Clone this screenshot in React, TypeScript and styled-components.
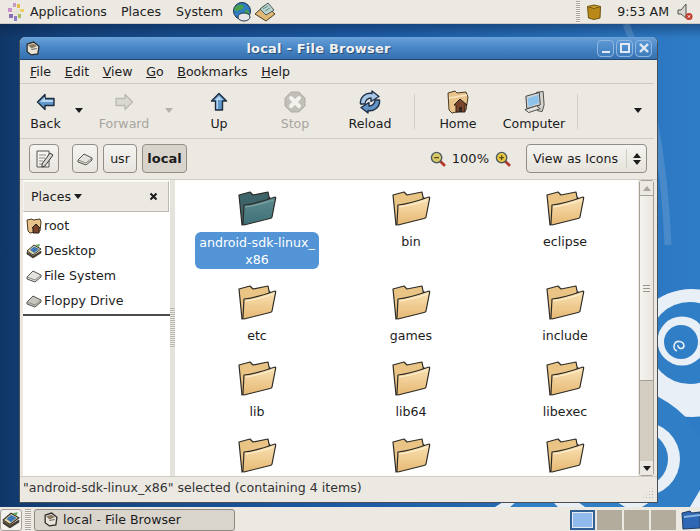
import * as React from 'react'
import styled, { createGlobalStyle } from 'styled-components'

const Global = createGlobalStyle`
  html, body { margin: 0; padding: 0; }
  body { width: 700px; height: 531px; overflow: hidden; font-family: "DejaVu Sans", sans-serif; font-size: 12.6px; color: #1c1c1c; }
  * { box-sizing: border-box; }
`

const Screen = styled.div`
  width: 700px;
  height: 531px;
  display: flex;
  flex-direction: column;
  background: #ece9e3;
`
const Panel = styled.div`
  height: 24px;
  flex: none;
  display: flex;
  align-items: center;
  background: #ece9e2;
`
const TopPanel = styled(Panel)`
  padding: 0 7px;
  border-bottom: 1px solid #cfcbc2;
`
const PanelMenu = styled.span<{ $gap: number }>`
  margin-left: ${p => p.$gap}px;
  color: #222;
`
const PanelIcons = styled.div`
  display: flex;
  align-items: center;
  gap: 2px;
  margin-left: 9px;
`
const Clock = styled.span`
  margin: 0 8px 0 16px;
  white-space: nowrap;
`
const Grip = styled.div<{ $w: number; $mr: number; $ml?: number }>`
  width: ${p => p.$w}px;
  height: 22px;
  flex: none;
  margin: 0 ${p => p.$mr}px 0 ${p => p.$ml || 0}px;
  background: repeating-linear-gradient(#a9a59c 0 1px, #f6f4f0 1px 2px);
`
const Spacer = styled.div`
  flex: 1;
`
const Desktop = styled.div`
  position: relative;
  flex: 1;
  overflow: hidden;
  background:
    linear-gradient(180deg, rgba(8, 28, 60, 0.4), rgba(8, 28, 60, 0) 14px),
    linear-gradient(90deg, #113768 0, #14427c 60px, #1c5aa4 340px, #2c76c0 640px, #2f7cc6 700px);
`
const Swirl = styled.svg`
  position: absolute;
  left: 0;
  top: 0;
`
const Window = styled.div`
  position: absolute;
  left: 19px;
  top: 13px;
  width: 639px;
  height: 466px;
  display: flex;
  flex-direction: column;
  background: #ece9e3;
  border: 1px solid #4a4f56;
  border-top: none;
  border-radius: 6px 6px 0 0;
  overflow: hidden;
`
const TitleBar = styled.div`
  height: 23px;
  flex: none;
  display: flex;
  align-items: center;
  gap: 2px;
  padding: 0 5px 0 5px;
  background: linear-gradient(#6aa1d8, #4a88c8 45%, #3570b0);
  border-bottom: 1px solid #24486f;
`
const Title = styled.div`
  flex: 1;
  text-align: center;
  color: #f2f2f2;
  font-weight: bold;
  font-size: 13px;
  letter-spacing: 0.2px;
  text-shadow: 1px 1px 0 #2a4f78;
`
const WinButton = styled.div`
  width: 17px;
  height: 17px;
  display: flex;
  align-items: center;
  justify-content: center;
  border: 1px solid #8fb6df;
  border-radius: 4px;
  background: linear-gradient(#5b97d4, #3f7dbd);
`
const MenuBar = styled.div`
  height: 24px;
  flex: none;
  display: flex;
  align-items: center;
  padding-left: 10px;
  gap: 13.6px;
  margin-right: 3px;
  border-bottom: 1px solid #cfccc4;
`
const MenuItem = styled.span`
  & u { text-underline-offset: 1px; }
`
const ToolBar = styled.div`
  height: 55px;
  flex: none;
  display: flex;
  align-items: stretch;
  margin-right: 3px;
  border-bottom: 1px solid #cfccc4;
`
const ToolButton = styled.div<{ $w: number; $off?: boolean }>`
  width: ${p => p.$w}px;
  display: flex;
  flex-direction: column;
  align-items: center;
  padding-top: 6px;
  color: ${p => (p.$off ? '#a8a59e' : '#1c1c1c')};
  flex: none;
`
const ToolIcon = styled.div`
  height: 24px;
  display: flex;
  align-items: center;
  justify-content: center;
`
const ToolLabel = styled.span`
  margin-top: 2px;
  line-height: 16px;
  white-space: nowrap;
`
const Arrow = styled.div<{ $off?: boolean; $mr?: number }>`
  width: 16px;
  flex: none;
  margin-right: ${p => p.$mr || 0}px;
  display: flex;
  align-items: center;
  justify-content: center;
  color: ${p => (p.$off ? '#b5b2aa' : '#1c1c1c')};
  padding-bottom: 2px;
  &::before {
    content: '';
    border: 4px solid transparent;
    border-top: 5px solid currentColor;
    border-bottom: none;
  }
`
const ToolSep = styled.div<{ $l: number }>`
  width: 1px;
  flex: none;
  margin: 10px 0 9px ${p => p.$l}px;
  background: #d2cfc7;
`
const LocationBar = styled.div`
  height: 41px;
  flex: none;
  display: flex;
  align-items: center;
  padding: 0 10px 1px 9px;
  border-bottom: 1px solid #cfccc4;
`
const PathButton = styled.div<{ $w: number; $mr: number; $on?: boolean }>`
  height: 29px;
  width: ${p => p.$w}px;
  margin-right: ${p => p.$mr}px;
  display: flex;
  align-items: center;
  justify-content: center;
  font-size: ${p => (p.$on ? 13 : 12.6)}px;
  font-weight: ${p => (p.$on ? 'bold' : 'normal')};
  background: ${p => (p.$on ? '#d9d4cb' : 'linear-gradient(#f6f4f1, #e8e5df)')};
  border: 1px solid #928e86;
  border-radius: 4px;
`
const ZoomLabel = styled.span`
  margin: 0 6px;
  font-size: 13px;
`
const ViewSelect = styled.div`
  width: 121px;
  height: 29px;
  margin-left: 15px;
  display: flex;
  align-items: center;
  padding-left: 6px;
  white-space: nowrap;
  background: linear-gradient(#f6f4f1, #e6e3dc);
  border: 1px solid #928e86;
  border-radius: 4px;
`
const SelectDivider = styled.div`
  width: 1px;
  height: 19px;
  margin: 0 6px 0 8px;
  background: #cfccc4;
`
const Main = styled.div`
  height: 296px;
  flex: none;
  display: flex;
  margin: 0 3px;
`
const Sidebar = styled.div`
  width: 147px;
  flex: none;
  display: flex;
  flex-direction: column;
  background: #fff;
`
const SideHead = styled.div`
  height: 31px;
  flex: none;
  margin: 1px 1px 0 0;
  display: flex;
  align-items: center;
  justify-content: space-between;
  padding: 0 10px 0 7px;
  background: #ece9e3;
  border: 1px solid #bdb9b0;
  border-top-color: #f5f3ef;
  border-left-color: #f5f3ef;
`
const HeadDrop = styled.span`
  display: inline-block;
  margin-left: 3px;
  vertical-align: 2px;
  border: 4px solid transparent;
  border-top: 5px solid #1c1c1c;
  border-bottom: none;
`
const SideList = styled.div`
  display: flex;
  flex-direction: column;
  padding-top: 1px;
  border-bottom: 2px solid #4c4c4c;
`
const SideRow = styled.div`
  height: 25px;
  display: flex;
  align-items: center;
  gap: 2px;
  padding-left: 3px;
  &:last-child { height: 26px; padding-bottom: 1px; }
`
const Handle = styled.div`
  width: 5px;
  flex: none;
  display: flex;
  align-items: center;
  justify-content: center;
  background: #e6e3dc;
  &::before {
    content: '';
    width: 5px;
    height: 40px;
    background: repeating-linear-gradient(#b9b5ac 0 1px, #eeece7 1px 2px);
  }
`
const IconView = styled.div`
  flex: 1;
  overflow: hidden;
  background: #fff;
  display: grid;
  grid-template-columns: repeat(3, 154px);
  grid-auto-rows: min-content;
  padding: 10px 0 0 5px;
`
const FileItem = styled.div<{ $h: number }>`
  height: ${p => p.$h}px;
  display: flex;
  flex-direction: column;
  align-items: center;
`
const FileName = styled.div<{ $on?: boolean }>`
  margin-top: ${p => (p.$on ? 6 : 7)}px;
  padding: ${p => (p.$on ? '2px 2px 1px' : '0')};
  width: ${p => (p.$on ? '124px' : 'auto')};
  text-align: center;
  line-height: 17px;
  color: ${p => (p.$on ? '#fff' : '#1c1c1c')};
  background: ${p => (p.$on ? '#5294d6' : 'transparent')};
  border-radius: 6px;
`
const ScrollBar = styled.div`
  width: 15px;
  flex: none;
  margin-left: 1px;
  display: flex;
  flex-direction: column;
  background: #d3cdc2;
  border: 1px solid #a5a198;
  border-radius: 3px;
`
const ScrollEnd = styled.div<{ $up?: boolean; $off?: boolean }>`
  height: 14px;
  flex: none;
  display: flex;
  align-items: center;
  justify-content: center;
  background: #ece9e3;
  color: ${p => (p.$off ? '#aaa69d' : '#1c1c1c')};
  &::before {
    content: '';
    border: 4px solid transparent;
    ${p => (p.$up ? 'border-bottom: 5px solid currentColor; border-top: none;' : 'border-top: 5px solid currentColor; border-bottom: none;')}
  }
`
const Thumb = styled.div`
  height: 186px;
  flex: none;
  display: flex;
  align-items: center;
  justify-content: center;
  background: linear-gradient(90deg, #f6f4f0, #e9e6df);
  border: 1px solid #a5a198;
  border-left: none;
  border-right: none;
  &::before {
    content: '';
    width: 7px;
    height: 7px;
    background: repeating-linear-gradient(#9a968d 0 1px, #f1efea 1px 3px);
  }
`
const StatusBar = styled.div`
  flex: 1;
  position: relative;
  display: flex;
  align-items: center;
  padding: 0 0 4px 3px;
  color: #333;
  border-top: 1px solid #cfccc4;
`
const SizeGrip = styled.div`
  position: absolute;
  right: 3px;
  bottom: 3px;
  width: 12px;
  height: 12px;
  background: radial-gradient(circle, #b5b1a8 1px, transparent 1px) 0 0 / 3px 3px;
  clip-path: polygon(100% 0, 100% 100%, 0 100%);
`
const BottomPanel = styled(Panel)`
  padding-top: 1px;
`
const ShowDesktop = styled.div`
  width: 22px;
  height: 22px;
  flex: none;
  display: flex;
  align-items: center;
  justify-content: center;
  border: 1px solid #a5a198;
  border-radius: 3px;
  background: #f4f2ee;
`
const TaskButton = styled.div`
  width: 201px;
  height: 22px;
  margin-left: 3px;
  display: flex;
  align-items: center;
  gap: 5px;
  padding-left: 8px;
  background: #d9d5cc;
  border: 1px solid #8e8a82;
  border-radius: 3px;
`
const Pager = styled.div`
  display: flex;
  gap: 2px;
  margin-right: 5px;
`
const Workspace = styled.div<{ $on?: boolean }>`
  width: 25px;
  height: 20px;
  background: ${p => (p.$on ? '#8fbcec' : '#b3ab9c')};
  border: ${p => (p.$on ? '2px solid #2f5f94' : 'none')};
  outline: ${p => (p.$on ? '1px solid #e6e9ee' : 'none')};
  outline-offset: -3px;
`

const Folder = ({ dark = false }: { dark?: boolean }) => {
  const back = dark ? '#3d6468' : '#e9c484'
  const top = dark ? '#5d8a8e' : '#fae2b4'
  const bottom = dark ? '#3f7078' : '#e6b873'
  const id = dark ? 'fd' : 'fl'
  return (
    <svg width="40" height="36" viewBox="0 0 40 36">
      <defs>
        <linearGradient id={id} x1="0" y1="0" x2="0" y2="1">
          <stop offset="0" stopColor={top} />
          <stop offset="1" stopColor={bottom} />
        </linearGradient>
      </defs>
      <path d="M2 5 L13 2 L16 5 L31 2 L32 7 L33 8 L6 34 L5 35 Z" fill={back} stroke="#2c2a26" strokeWidth="1.2" strokeLinejoin="round" />
      <path d="M7 15 Q18 14 38 7 Q39 7 38.5 9 L35 27 Q35 28 33 28.5 L7 35 Q5.5 35 6 33 Z" fill={`url(#${id})`} stroke="#2c2a26" strokeWidth="1.2" strokeLinejoin="round" />
      <path d="M8 17 Q20 15.5 36.5 10" fill="none" stroke={dark ? '#7fa6a8' : '#fff0d0'} strokeWidth="1.2" />
    </svg>
  )
}

const FootIcon = () => (
  <svg width="18" height="18" viewBox="0 0 18 18">
    <rect x="6" y="0" width="3" height="4" fill="#c39ac8" />
    <rect x="10" y="1" width="3" height="4" fill="#e5bc4c" />
    <rect x="1" y="5" width="4" height="4" fill="#c98fcb" />
    <rect x="13" y="6" width="4" height="3" fill="#ecd068" />
    <rect x="6" y="6" width="6" height="6" fill="#e9e4d8" />
    <rect x="2" y="11" width="4" height="4" fill="#8a6fb0" />
    <rect x="7" y="13" width="3" height="5" fill="#8f7ec6" />
    <rect x="11" y="11" width="3" height="4" fill="#a6bc62" />
  </svg>
)

const Globe = () => (
  <svg width="20" height="20" viewBox="0 0 20 20">
    <circle cx="10" cy="9" r="8.5" fill="#2f7cc0" stroke="#20344c" />
    <path d="M4 4 Q9 1 12 4 Q11 8 7 8 Q5 10 2 8 Z" fill="#49a04a" />
    <path d="M13 8 Q18 8 17 12 L13 13 Z" fill="#49a04a" />
    <ellipse cx="12" cy="15" rx="6" ry="4" fill="#e6e6e6" stroke="#20344c" />
  </svg>
)

const MailFolder = () => (
  <svg width="22" height="20" viewBox="0 0 22 20">
    <path d="M1 12 L11 3 L21 12 L12 19 Z" fill="#e0b878" stroke="#4c3c20" />
    <path d="M6 7 L14 1 L20 8 L12 13 Z" fill="#bcd4d0" stroke="#4c5c58" />
    <path d="M9 7 L14 4 M11 9 L16 6" stroke="#5e8a84" />
  </svg>
)

const Box = () => (
  <svg width="14" height="16" viewBox="0 0 14 16">
    <path d="M0.5 2.5 L7 1 L13.5 2.5 L13 14 L7 15.5 L1.5 14 Z" fill="#b98a18" stroke="#6e520e" />
    <path d="M0.5 2.5 L7 4.5 L13.5 2.5" fill="#d8ae3c" stroke="#6e520e" />
  </svg>
)

const Speaker = () => (
  <svg width="16" height="18" viewBox="0 0 16 18">
    <path d="M1 7 L4 7 L9 1 L9 15 L4 11 L1 11 Z" fill="#d8d6d0" stroke="#55534e" />
    <circle cx="12" cy="13.5" r="3.5" fill="#c0392b" />
    <path d="M10.8 12.3 L13.2 14.7 M13.2 12.3 L10.8 14.7" stroke="#fff" />
  </svg>
)

const CabinetIcon = ({ size = 15 }: { size?: number }) => (
  <svg width={size} height={size} viewBox="0 0 14 14">
    <path d="M2 3 L8 1 L13 5 L12 12 L6 13 L2 10 Z" fill="#e8e4da" stroke="#2e2c28" strokeWidth="1.2" />
    <path d="M3 4 L8 2.5 L11 5 L6 7 Z" fill="#8a7a60" />
    <path d="M6 8 L11 7" stroke="#6e6a60" />
  </svg>
)

const BackIcon = ({ off = false, flip = false }: { off?: boolean; flip?: boolean }) => (
  <svg width="20" height="18" viewBox="0 0 20 18" style={{ transform: flip ? 'scaleX(-1)' : undefined }}>
    <path
      d="M1.5 9 L9 1.5 L9 5.5 L18 5.5 L18 12.5 L9 12.5 L9 16.5 Z"
      fill={off ? '#d9d7d1' : '#5f97cb'}
      stroke={off ? '#bcbab3' : '#1f2c3c'}
      strokeWidth="1.4"
      strokeLinejoin="round"
    />
    {!off && <path d="M4 9 L9 4 L9 7 L17 7 L17 9 Z" fill="#b7d5ef" />}
  </svg>
)

const UpIcon = () => (
  <svg width="18" height="20" viewBox="0 0 18 20">
    <path d="M9 1.5 L16.5 9 L12.5 9 L12.5 18 L5.5 18 L5.5 9 L1.5 9 Z" fill="#5f97cb" stroke="#1f2c3c" strokeWidth="1.4" strokeLinejoin="round" />
    <path d="M9 4 L13 8 L8 8 L8 17 L6.5 17 L6.5 8 L4.5 8 Z" fill="#b7d5ef" />
  </svg>
)

const StopIcon = () => (
  <svg width="22" height="22" viewBox="0 0 22 22">
    <path d="M7 1 L15 1 L21 7 L21 15 L15 21 L7 21 L1 15 L1 7 Z" fill="#c2bfb8" stroke="#b0ada6" strokeLinejoin="round" />
    <path d="M7 7 L15 15 M15 7 L7 15" stroke="#f3f2ee" strokeWidth="4" strokeLinecap="round" />
  </svg>
)

const ReloadIcon = () => (
  <svg width="24" height="24" viewBox="0 0 24 24" fill="none" strokeLinejoin="round">
    <path d="M2.5 14 A9.5 9.5 0 0 1 14 3.5 L14 1 L21 6.5 L13 11.5 L13 8 A6 6 0 0 0 7 14 Z" fill="#a9c9e6" stroke="#1f3048" strokeWidth="1.4" />
    <path d="M21.5 10 A9.5 9.5 0 0 1 10 20.5 L10 23 L3 17.5 L11 12.5 L11 16 A6 6 0 0 0 17 10 Z" fill="#6294c6" stroke="#1f3048" strokeWidth="1.4" />
  </svg>
)

const HomeIcon = () => (
  <svg width="22" height="24" viewBox="0 0 22 24">
    <path d="M1 3 L8 1 L10 3 L19 2 L21 7 L19 20 L5 23 L2 20 Z" fill="#e8c48c" stroke="#4a3a20" />
    <path d="M2 8 L20 5" stroke="#fbe8c4" strokeWidth="1.5" />
    <path d="M7 15 L13 9 L20 15 L18 15 L18 22 L9 22 L9 15 Z" fill="#7a452c" stroke="#2a1e14" />
    <rect x="12" y="17" width="3" height="5" fill="#2e2620" />
  </svg>
)

const ComputerIcon = () => (
  <svg width="23" height="24" viewBox="0 0 24 24">
    <path d="M14 2 L21 1 L22 15 L20 22 L15 21 Z" fill="#d6d4ce" stroke="#4c4a46" />
    <path d="M3 6 L17 2 L18 15 L4 19 Z" fill="#cfd3d6" stroke="#3c3c3c" />
    <path d="M5 8 L16 4.5 L16.5 13 L6 17 Z" fill="#8cc3ea" />
    <path d="M2 20 L14 16 L18 19 L6 23 Z" fill="#e3e1dc" stroke="#4c4a46" />
  </svg>
)

const DriveIcon = ({ dark = false }: { dark?: boolean }) => (
  <svg width="16" height="14" viewBox="0 0 16 14">
    <path d="M1 8 L7 2 L15 6 L15 8 L9 13 L1 10 Z" fill={dark ? '#c9c6bf' : '#e4e2dd'} stroke="#55534e" />
    <path d="M1 8 L9 11 L15 6" fill="none" stroke="#8a8880" />
  </svg>
)

const RootIcon = () => (
  <svg width="16" height="16" viewBox="0 0 16 16">
    <path d="M1 2 L6 1 L7 2 L14 1 L15 4 L14 13 L4 15 L2 13 Z" fill="#e8c48c" stroke="#4a3a20" />
    <path d="M6 10 L10 6 L14 10 L13 10 L13 15 L7 15 L7 10 Z" fill="#7a452c" stroke="#2a1e14" />
  </svg>
)

const DesktopIcon = ({ size = 16 }: { size?: number }) => (
  <svg width={size} height={size} viewBox="0 0 16 16">
    <path d="M1 9 L7 13 L15 8 L15 10 L7 15 L1 11 Z" fill="#4f3f2a" stroke="#222" strokeWidth="0.6" />
    <path d="M1 8 L8 2 L15 6 L7 12 Z" fill="#e4d8a8" stroke="#3a3426" />
    <path d="M4 7 L8 3.5 L13 6 L8 10 Z" fill="#3f78b8" />
    <path d="M9 2 L14 1 L13 4 Z" fill="#5fa35a" />
  </svg>
)

const EditIcon = () => (
  <svg width="20" height="20" viewBox="0 0 20 20">
    <path d="M3 2 L15 2 L15 18 L3 18 Z" fill="#f6f5f1" stroke="#55534e" />
    <path d="M5 6 L12 6 M5 9 L11 9 M5 12 L9 12 M5 15 L8 15" stroke="#8a8880" />
    <path d="M8 15 L16 4 L19 6 L11 17 L8 18 Z" fill="#d8d6d0" stroke="#3c3a36" />
  </svg>
)

const ZoomIcon = ({ plus = false }: { plus?: boolean }) => (
  <svg width="16" height="16" viewBox="0 0 17 17">
    <path d="M10 10 L15 15" stroke="#b5382a" strokeWidth="3" strokeLinecap="round" />
    <circle cx="7" cy="7" r="5.5" fill={plus ? '#e8c840' : '#d8c868'} stroke="#4c5a62" strokeWidth="1.5" />
    <path d={plus ? 'M4.5 7 L9.5 7 M7 4.5 L7 9.5' : 'M4.5 7 L9.5 7'} stroke="#5c4a10" strokeWidth="1.4" />
  </svg>
)

const WinGlyph = ({ kind }: { kind: 'min' | 'max' | 'close' }) => (
  <svg width="12" height="12" viewBox="0 0 12 12" fill="none" stroke="#dfeaf6" strokeWidth="2">
    {kind === 'min' && <path d="M2 10 L10 10" />}
    {kind === 'max' && <rect x="2" y="2" width="8" height="8" />}
    {kind === 'close' && <path d="M2 2 L10 10 M10 2 L2 10" strokeWidth="2.4" />}
  </svg>
)

const CloseGlyph = () => (
  <svg width="9" height="9" viewBox="0 0 9 9">
    <path d="M1.5 1.5 L7.5 7.5 M7.5 1.5 L1.5 7.5" stroke="#1c1c1c" strokeWidth="2" />
  </svg>
)

const TrashFolder = () => (
  <svg width="19" height="20" viewBox="0 0 19 20">
    <path d="M1 3 L9 1 L11 3 L19 2 L19 18 L2 19 Z" fill="#2e68b4" stroke="#203a60" />
    <path d="M3 7 L19 5" stroke="#8ab4e0" strokeWidth="2" />
  </svg>
)

// background art, in page coordinates
const DesktopArt = () => (
  <Swirl width="700" height="483" viewBox="0 24 700 483">
    <path d="M626 24 Q662 110 668 245" fill="none" stroke="#fff" strokeOpacity="0.13" strokeWidth="7" />
    <circle cx="692" cy="353" r="64" fill="#e8eff6" />
    <circle cx="690" cy="343" r="41" fill="#2f7ec6" />
    <circle cx="682" cy="341" r="24.5" fill="#e8eff6" />
    <circle cx="681" cy="342" r="17" fill="#2f7ec6" />
    <path d="M677 351 A5 5 0 1 1 684 346 A3 3 0 1 1 678 345" fill="none" stroke="#e8eff6" strokeWidth="1.6" />
    <circle cx="610" cy="490" r="105" fill="#2f7ec6" />
    <circle cx="643" cy="459" r="37" fill="#e8eff6" />
    <circle cx="640" cy="459" r="28" fill="#2f7ec6" />
    <path d="M495 507 L503 502 L516 502 L510 507 Z M553 502 L578 502 L585 507 L558 507 Z M617 502 L650 502 L642 507 L625 507 Z M700 490 L700 507 L690 507 Z" fill="#e8eff6" />
  </Swirl>
)

const files = [
  ['android-sdk-linux_', 'bin', 'eclipse'],
  ['etc', 'games', 'include'],
  ['lib', 'lib64', 'libexec'],
  ['', '', '']
]
const rowHeights = [94, 76, 77, 40]

const menus = ['File', 'Edit', 'View', 'Go', 'Bookmarks', 'Help']

export default function App() {
  return (
    <Screen>
      <Global />
      <TopPanel>
        <FootIcon />
        <PanelMenu $gap={5}>Applications</PanelMenu>
        <PanelMenu $gap={14}>Places</PanelMenu>
        <PanelMenu $gap={15}>System</PanelMenu>
        <PanelIcons>
          <Globe />
          <MailFolder />
        </PanelIcons>
        <Spacer />
        <Grip $w={4} $mr={7} />
        <Box />
        <Clock>9:53 AM</Clock>
        <Speaker />
      </TopPanel>
      <Desktop>
        <DesktopArt />
        <Window>
          <TitleBar>
            <CabinetIcon />
            <Title>local - File Browser</Title>
            <WinButton><WinGlyph kind="min" /></WinButton>
            <WinButton><WinGlyph kind="max" /></WinButton>
            <WinButton><WinGlyph kind="close" /></WinButton>
          </TitleBar>
          <MenuBar>
            {menus.map(m => (
              <MenuItem key={m}><u>{m[0]}</u>{m.slice(1)}</MenuItem>
            ))}
          </MenuBar>
          <ToolBar>
            <ToolButton $w={51}><ToolIcon><BackIcon /></ToolIcon><ToolLabel>Back</ToolLabel></ToolButton>
            <Arrow />
            <ToolButton $w={74} $off><ToolIcon><BackIcon off flip /></ToolIcon><ToolLabel>Forward</ToolLabel></ToolButton>
            <Arrow $off />
            <ToolButton $w={84}><ToolIcon><UpIcon /></ToolIcon><ToolLabel>Up</ToolLabel></ToolButton>
            <ToolButton $w={68} $off><ToolIcon><StopIcon /></ToolIcon><ToolLabel>Stop</ToolLabel></ToolButton>
            <ToolButton $w={82}><ToolIcon><ReloadIcon /></ToolIcon><ToolLabel>Reload</ToolLabel></ToolButton>
            <ToolSep $l={3} />
            <ToolButton $w={86}><ToolIcon><HomeIcon /></ToolIcon><ToolLabel>Home</ToolLabel></ToolButton>
            <ToolButton $w={66}><ToolIcon><ComputerIcon /></ToolIcon><ToolLabel>Computer</ToolLabel></ToolButton>
            <ToolSep $l={10} />
            <Spacer />
            <Arrow $mr={8} />
          </ToolBar>
          <LocationBar>
            <PathButton $w={30} $mr={13}><EditIcon /></PathButton>
            <PathButton $w={26} $mr={5}><DriveIcon /></PathButton>
            <PathButton $w={34} $mr={5}>usr</PathButton>
            <PathButton $w={45} $mr={0} $on>local</PathButton>
            <Spacer />
            <ZoomIcon />
            <ZoomLabel>100%</ZoomLabel>
            <ZoomIcon plus />
            <ViewSelect>
              View as Icons
              <SelectDivider />
              <svg width="8" height="14" viewBox="0 0 8 14"><path d="M4 1 L8 6 L0 6 Z M4 13 L8 8 L0 8 Z" fill="#1c1c1c" /></svg>
            </ViewSelect>
          </LocationBar>
          <Main>
            <Sidebar>
              <SideHead>
                <span>Places<HeadDrop /></span>
                <CloseGlyph />
              </SideHead>
              <SideList>
                <SideRow><RootIcon />root</SideRow>
                <SideRow><DesktopIcon />Desktop</SideRow>
                <SideRow><DriveIcon />File System</SideRow>
                <SideRow><DriveIcon dark />Floppy Drive</SideRow>
              </SideList>
            </Sidebar>
            <Handle />
            <IconView>
              {files.flatMap((row, r) =>
                row.map((name, c) => {
                  const on = r === 0 && c === 0
                  return (
                    <FileItem key={`${r}-${c}`} $h={rowHeights[r]}>
                      <Folder dark={on} />
                      {name && (
                        <FileName $on={on}>
                          {name}
                          {on && <><br />x86</>}
                        </FileName>
                      )}
                    </FileItem>
                  )
                })
              )}
            </IconView>
            <ScrollBar>
              <ScrollEnd $up $off />
              <Thumb />
              <Spacer />
              <ScrollEnd />
            </ScrollBar>
          </Main>
          <StatusBar>
            "android-sdk-linux_x86" selected (containing 4 items)
            <SizeGrip />
          </StatusBar>
        </Window>
      </Desktop>
      <BottomPanel>
        <ShowDesktop><DesktopIcon size={18} /></ShowDesktop>
        <Grip $w={6} $mr={0} $ml={3} />
        <TaskButton><CabinetIcon />local - File Browser</TaskButton>
        <Spacer />
        <Pager>
          <Workspace $on />
          <Workspace />
          <Workspace />
          <Workspace />
        </Pager>
        <TrashFolder />
      </BottomPanel>
    </Screen>
  )
}
